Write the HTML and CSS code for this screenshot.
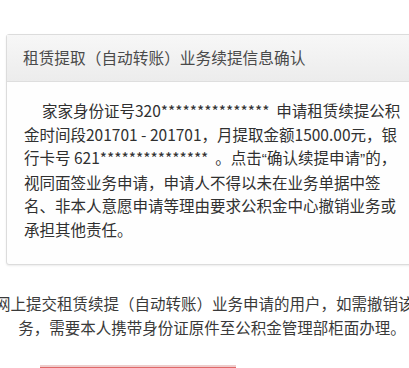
FILE: index.html
```html
<!DOCTYPE html>
<html>
<head>
<meta charset="UTF-8">
<title>租赁提取续提信息确认</title>
<link rel="stylesheet" href="styles.css">
</head>
<body>
<div class="page">
    <div class="panel">
        <div class="panel-hd">租赁提取（自动转账）业务续提信息确认</div>
        <div class="panel-bd">
            <p class="confirm-text">家家身份证号320***************&nbsp;&nbsp;申请租赁续提公积<br>金时间段201701 - 201701，月提取金额1500.00元，银<br>行卡号 621***************&nbsp;&nbsp;。点击<span class="q">“</span>确认续提申请<span class="q">”</span>的，<br>视同面签业务申请，申请人不得以未在业务单据中签<br>名、非本人意愿申请等理由要求公积金中心撤销业务或<br>承担其他责任。</p>
        </div>
    </div>
    <p class="notice">网上提交租赁续提（自动转账）业务申请的用户，如需撤销该业<br>务，需要本人携带身份证原件至公积金管理部柜面办理。</p>
    <div class="btn-row">
        <a class="BTN_CONFIRM">确认续提申请</a>
    </div>
</div>
</body>
</html>
```

FILE: styles.css
```css
body {
    margin: 0;
    background: #fff;
    font-family: "Noto Sans CJK SC", "Liberation Sans", sans-serif;
    color: #333;
    overflow: hidden;
}
.page {
    width: 440px;
    margin-left: -8px;
    padding-top: 34px;
}
.panel {
    margin: 0 8px 0 14px;
    border: 1px solid #dcdcdc;
    border-radius: 3px;
    background: #fefefe;
    box-shadow: 0 1px 2px rgba(0, 0, 0, 0.08);
}
.panel-hd {
    height: 46px;
    line-height: 46px;
    padding: 0 16px;
    font-size: 15.7px;
    color: #4a4a4a;
    background: linear-gradient(#f7f7f7, #ececec);
    border-bottom: 1px solid #dedede;
    white-space: nowrap;
}
.panel-bd {
    padding: 17px 17px 23px 17px;
}
.confirm-text {
    margin: 0;
    font-size: 15.5px;
    line-height: 23.5px;
    text-indent: 18px;
    color: #303030;
    white-space: nowrap;
}
.q {
    font-family: "Liberation Sans", sans-serif;
}
.notice {
    margin: 26px 0 0 0;
    font-size: 15.5px;
    line-height: 24px;
    text-align: center;
    color: #3a3a3a;
    white-space: nowrap;
}
.btn-row {
    padding: 26px 0 0 48px;
}
.BTN_CONFIRM {
    display: block;
    width: 196px;
    height: 36px;
    line-height: 36px;
    text-align: center;
    font-size: 15px;
    color: #fff;
    background: #e06a6a;
    border-top: 2px solid #efcccc;
}
```
